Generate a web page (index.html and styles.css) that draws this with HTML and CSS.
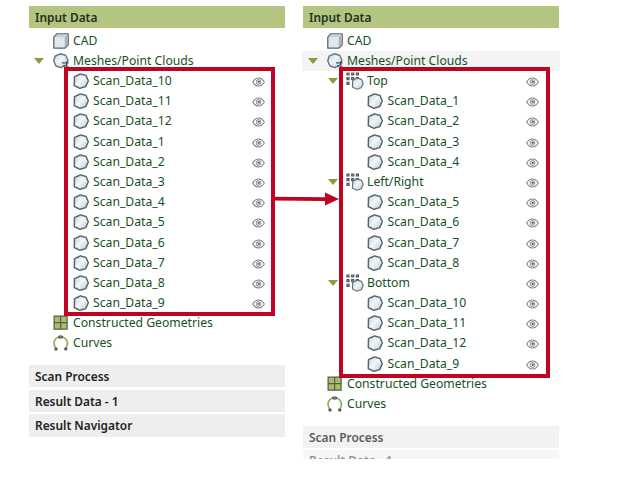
FILE: index.html
```
<!DOCTYPE html>
<html lang="en">
<head>
<meta charset="utf-8">
<title>Input Data</title>
<link rel="stylesheet" href="styles.css">
</head>
<body>
<svg class="defs" aria-hidden="true">
  <defs>
    <linearGradient id="face" x1="0" y1="0" x2="1" y2="1"><stop offset="0" stop-color="#c3d0d9"/><stop offset=".45" stop-color="#eef5f8"/><stop offset="1" stop-color="#bccbd4"/></linearGradient>
    <symbol id="cad" viewBox="0 0 16 16"><path d="M.8 4.300 4 .8H15.200v10.900L11.800 15.200H.8z" fill="#e1e8ec" stroke="#5c666f" stroke-width="1.300" stroke-linejoin="round"/><path d="M11.700 4.300 14.600 1.400v10L11.700 14.500z" fill="#a9b4bd"/><path d="M1.500 4.200 4.300 1.500h10L11.500 4.200z" fill="#c9d1d7"/></symbol>
    <symbol id="scan" viewBox="0 0 16 16"><path d="M1.500 3.700 7.400.9 13 2.500 15.300 7.800 12.700 13.600 6.900 15.300 1.300 12.500z" fill="url(#face)" stroke="#59636c" stroke-width="1.500" stroke-linejoin="round"/><path d="M2.200 4 10 5.200 12.700 3M10 5.200 14.500 7.800M10 5.200 6 10.800l1 3.700M6 10.800l-4 1.400" fill="none" stroke="#fff" stroke-opacity=".5" stroke-width=".8"/></symbol>
    <symbol id="mesh" viewBox="0 0 16 16"><path d="M2 3.200 7.200.8 12.600 2.200 15 7.200 13.200 12 8 14.700 3 13 .8 8z" fill="url(#face)" stroke="#6a747d" stroke-width="1.400" stroke-linejoin="round"/><path d="M9 9.200h6.500v1.400H9zM13 8.200h1.400v7.300H13zM10.300 12h2v1.800h-2zM14.400 13.500H16v2h-1.600z" fill="#4d545b"/></symbol>
    <symbol id="group" viewBox="0 0 18 18"><g fill="#bbb" stroke="#55555b" stroke-width="1.200"><path d="M1 1h2v2H1zM5.700 1h2v2h-2zM10.400 1h2v2h-2zM1 5.700h2v2H1zM5.700 5.700h2v2h-2zM10.400 5.700h2v2h-2zM1 10.400h2v2H1z"/></g><path d="m6.700 8.200 4.500-2.100 4.300 1.300 1.700 4.100-2 4.300-4.400 1.400-4.300-2.200z" fill="url(#face)" stroke="#68727b" stroke-width="1.200" stroke-linejoin="round"/></symbol>
    <symbol id="geo" viewBox="0 0 16 16"><path d="M1.100 1.100h13v13h-13z" fill="#a9bf66" stroke="#565a50" stroke-width="1.200"/><path d="M7.600 1v13.200M1 7.600h13.200" stroke="#565a50" stroke-width="1.200"/></symbol>
    <symbol id="curve" viewBox="0 0 16 16"><path d="M3 13.500C-.8 8.500 1.200 2 7.600 2s8.700 6.500 5 11.500" fill="none" stroke="#93ae5a" stroke-width="1.700"/><path d="M5.800 1h3.600v2H5.800zM2 13h2v2H2zM11.800 13h2v2h-2z" fill="#aaa" stroke="#444" stroke-width="1"/></symbol>
    <symbol id="eye" viewBox="0 0 13 10"><path d="M.7 5Q3 1 6.500 1T12.300 5Q10 9 6.500 9T.7 5z" fill="#fff" stroke="#808080" stroke-width="1.100"/><circle cx="6.500" cy="5" r="2.400" fill="#ddd" stroke="#888" stroke-width=".9"/><circle cx="6.800" cy="4.800" r="1.100" fill="#666"/></symbol>
  </defs>
</svg>
<main class="board">
  <section class="panel">
    <h2 class="bar bar-active">Input Data</h2>
    <ul class="tree">
      <li class="row"><i class="tw"></i><svg class="icon"><use href="#cad"/></svg>CAD</li>
      <li class="row"><i class="tw open"></i><svg class="icon"><use href="#mesh"/></svg>Meshes/Point Clouds</li>
      <li class="row l1"><i class="tw"></i><svg class="icon"><use href="#scan"/></svg>Scan_Data_10<svg class="eye"><use href="#eye"/></svg></li>
      <li class="row l1"><i class="tw"></i><svg class="icon"><use href="#scan"/></svg>Scan_Data_11<svg class="eye"><use href="#eye"/></svg></li>
      <li class="row l1"><i class="tw"></i><svg class="icon"><use href="#scan"/></svg>Scan_Data_12<svg class="eye"><use href="#eye"/></svg></li>
      <li class="row l1"><i class="tw"></i><svg class="icon"><use href="#scan"/></svg>Scan_Data_1<svg class="eye"><use href="#eye"/></svg></li>
      <li class="row l1"><i class="tw"></i><svg class="icon"><use href="#scan"/></svg>Scan_Data_2<svg class="eye"><use href="#eye"/></svg></li>
      <li class="row l1"><i class="tw"></i><svg class="icon"><use href="#scan"/></svg>Scan_Data_3<svg class="eye"><use href="#eye"/></svg></li>
      <li class="row l1"><i class="tw"></i><svg class="icon"><use href="#scan"/></svg>Scan_Data_4<svg class="eye"><use href="#eye"/></svg></li>
      <li class="row l1"><i class="tw"></i><svg class="icon"><use href="#scan"/></svg>Scan_Data_5<svg class="eye"><use href="#eye"/></svg></li>
      <li class="row l1"><i class="tw"></i><svg class="icon"><use href="#scan"/></svg>Scan_Data_6<svg class="eye"><use href="#eye"/></svg></li>
      <li class="row l1"><i class="tw"></i><svg class="icon"><use href="#scan"/></svg>Scan_Data_7<svg class="eye"><use href="#eye"/></svg></li>
      <li class="row l1"><i class="tw"></i><svg class="icon"><use href="#scan"/></svg>Scan_Data_8<svg class="eye"><use href="#eye"/></svg></li>
      <li class="row l1"><i class="tw"></i><svg class="icon"><use href="#scan"/></svg>Scan_Data_9<svg class="eye"><use href="#eye"/></svg></li>
      <li class="row"><i class="tw"></i><svg class="icon"><use href="#geo"/></svg>Constructed Geometries</li>
      <li class="row"><i class="tw"></i><svg class="icon"><use href="#curve"/></svg>Curves</li>
    </ul>
    <div class="sections">
      <h2 class="bar">Scan Process</h2>
      <h2 class="bar">Result Data - 1</h2>
      <h2 class="bar">Result Navigator</h2>
    </div>
    <div class="frame frame-before"></div>
    <svg class="arrow" viewBox="0 0 66 14"><path d="M0 4.700 52 5.300V.5L66 7 52 13.500V9L0 8.500z" fill="#be0420"/></svg>
  </section>
  <section class="panel">
    <h2 class="bar bar-active">Input Data</h2>
    <ul class="tree">
      <li class="row"><i class="tw"></i><svg class="icon"><use href="#cad"/></svg>CAD</li>
      <li class="row selected"><i class="tw open"></i><svg class="icon"><use href="#mesh"/></svg>Meshes/Point Clouds</li>
      <li class="row l1"><i class="tw open"></i><svg class="icon group"><use href="#group"/></svg>Top<svg class="eye"><use href="#eye"/></svg></li>
      <li class="row l2"><i class="tw"></i><svg class="icon"><use href="#scan"/></svg>Scan_Data_1<svg class="eye"><use href="#eye"/></svg></li>
      <li class="row l2"><i class="tw"></i><svg class="icon"><use href="#scan"/></svg>Scan_Data_2<svg class="eye"><use href="#eye"/></svg></li>
      <li class="row l2"><i class="tw"></i><svg class="icon"><use href="#scan"/></svg>Scan_Data_3<svg class="eye"><use href="#eye"/></svg></li>
      <li class="row l2"><i class="tw"></i><svg class="icon"><use href="#scan"/></svg>Scan_Data_4<svg class="eye"><use href="#eye"/></svg></li>
      <li class="row l1"><i class="tw open"></i><svg class="icon group"><use href="#group"/></svg>Left/Right<svg class="eye"><use href="#eye"/></svg></li>
      <li class="row l2"><i class="tw"></i><svg class="icon"><use href="#scan"/></svg>Scan_Data_5<svg class="eye"><use href="#eye"/></svg></li>
      <li class="row l2"><i class="tw"></i><svg class="icon"><use href="#scan"/></svg>Scan_Data_6<svg class="eye"><use href="#eye"/></svg></li>
      <li class="row l2"><i class="tw"></i><svg class="icon"><use href="#scan"/></svg>Scan_Data_7<svg class="eye"><use href="#eye"/></svg></li>
      <li class="row l2"><i class="tw"></i><svg class="icon"><use href="#scan"/></svg>Scan_Data_8<svg class="eye"><use href="#eye"/></svg></li>
      <li class="row l1"><i class="tw open"></i><svg class="icon group"><use href="#group"/></svg>Bottom<svg class="eye"><use href="#eye"/></svg></li>
      <li class="row l2"><i class="tw"></i><svg class="icon"><use href="#scan"/></svg>Scan_Data_10<svg class="eye"><use href="#eye"/></svg></li>
      <li class="row l2"><i class="tw"></i><svg class="icon"><use href="#scan"/></svg>Scan_Data_11<svg class="eye"><use href="#eye"/></svg></li>
      <li class="row l2"><i class="tw"></i><svg class="icon"><use href="#scan"/></svg>Scan_Data_12<svg class="eye"><use href="#eye"/></svg></li>
      <li class="row l2"><i class="tw"></i><svg class="icon"><use href="#scan"/></svg>Scan_Data_9<svg class="eye"><use href="#eye"/></svg></li>
      <li class="row"><i class="tw"></i><svg class="icon"><use href="#geo"/></svg>Constructed Geometries</li>
      <li class="row"><i class="tw"></i><svg class="icon"><use href="#curve"/></svg>Curves</li>
    </ul>
    <div class="sections faded">
      <h2 class="bar">Scan Process</h2>
      <h2 class="bar">Result Data - 1</h2>
    </div>
    <div class="frame frame-after"></div>
  </section>
</main>
</body>
</html>
```
FILE: styles.css
```
* { box-sizing: border-box; }
body {
  margin: 0;
  background: #fff;
  color: #16501f;
  font: 12.2px/20px "Noto Sans", "Open Sans", sans-serif;
}
.defs { position: absolute; width: 0; height: 0; }
.board {
  display: flex;
  align-items: flex-start;
  gap: 18px;
  width: 622px;
  height: 497px;
  padding: 6px 0 0 29px;
  overflow: hidden;
}
.panel { position: relative; width: 256px; }
.bar {
  height: 22.4px;
  margin: 0;
  padding-left: 6px;
  background: #eee;
  color: #222;
  font-size: 11.9px;
  font-weight: 600;
  line-height: 23px;
  white-space: nowrap;
}
.bar-active { background: #b3c580; color: #25301d; }
.tree { margin: 2.2px 0 0; padding: 0; list-style: none; }
.row {
  display: flex;
  align-items: center;
  height: 20.2px;
  padding-left: 4px;
  white-space: nowrap;
}
.l1 { padding-left: 24px; }
.l2 { padding-left: 44.5px; }
.selected { margin: 0 -1px; padding-left: 5px; background: #f4f4f4; }
.tw { flex: none; width: 19.5px; }
.open::before {
  content: "";
  display: block;
  width: 0;
  margin-left: 0.5px;
  border: 5.2px solid transparent;
  border-top: 6px solid #82a13e;
  border-bottom: 0;
}
.icon { flex: none; width: 16px; height: 16px; margin-right: 4.5px; }
.icon.group { width: 18px; height: 18px; margin: 0 3px 0 -0.5px; }
.eye { flex: none; width: 13px; height: 10px; margin: 2px 20px 0 auto; }
.sections { display: flex; flex-direction: column; gap: 2.2px; margin-top: 11.4px; }
.faded { height: 33px; overflow: hidden; opacity: .75; }
.faded .bar { flex: none; }
.faded .bar:last-child { line-height: 21px; opacity: .65; }
.frame { position: absolute; top: 61px; border: 4.5px solid #be0420; }
.frame-before { left: 35px; width: 211px; height: 249px; }
.frame-after { left: 36px; width: 211px; height: 310.5px; }
.arrow { position: absolute; left: 244px; top: 185.5px; width: 66px; height: 14px; }
```
